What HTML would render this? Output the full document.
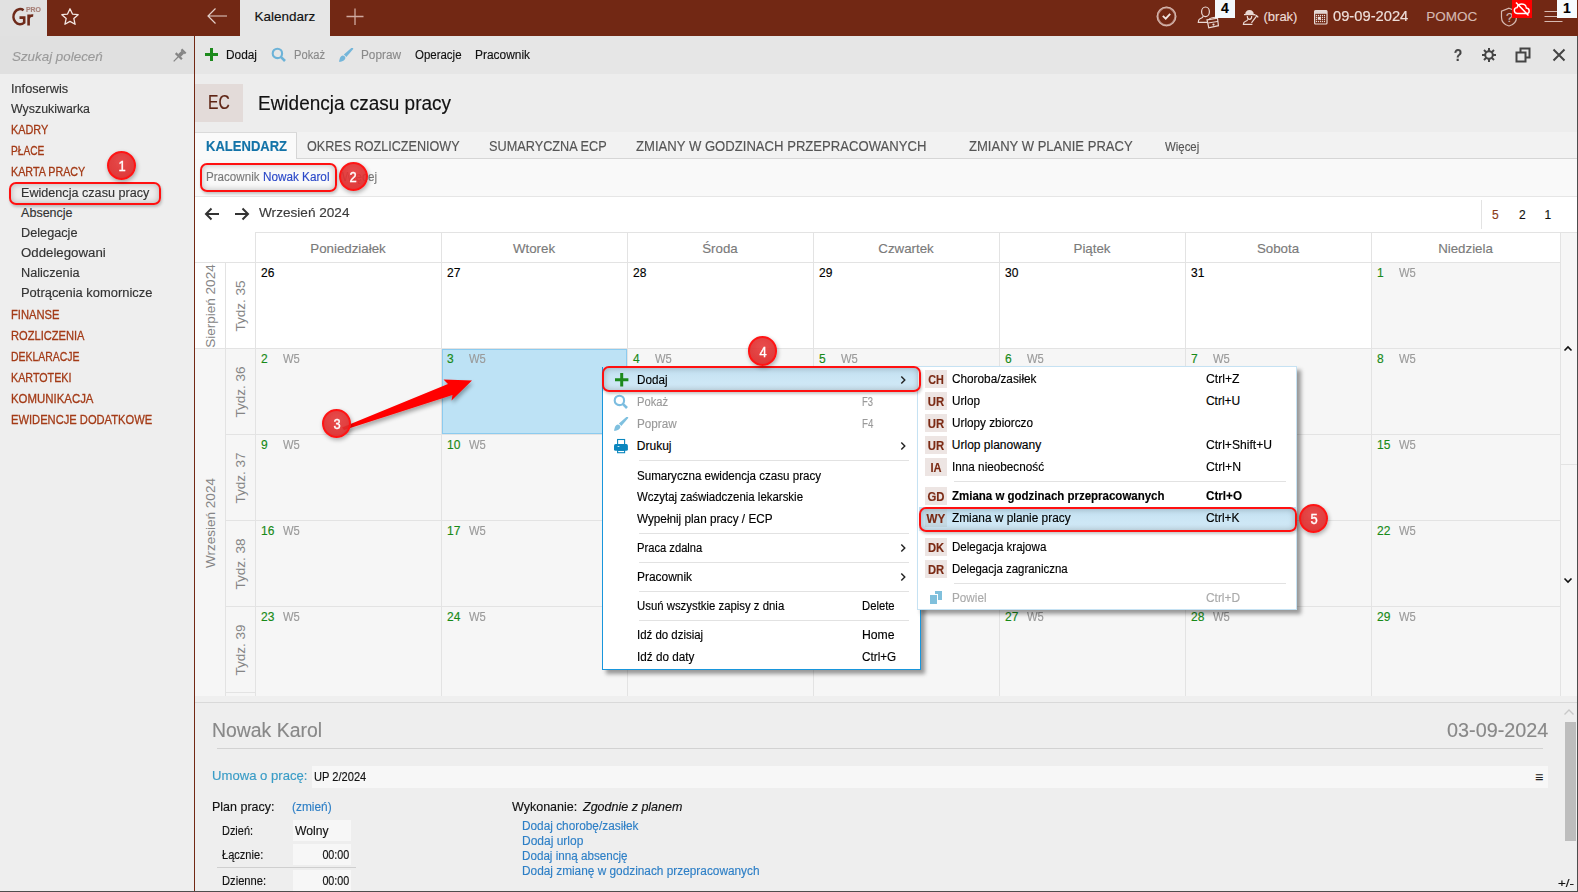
<!DOCTYPE html>
<html><head><meta charset="utf-8"><title>Ewidencja czasu pracy</title>
<style>
html,body{margin:0;padding:0;width:1578px;height:892px;overflow:hidden;background:#eeeeee;}
body{position:relative;font-family:"Liberation Sans", sans-serif;}
.a{position:absolute;}
.t{position:absolute;line-height:0;white-space:nowrap;-webkit-text-stroke:0.15px currentColor;}
</style></head><body>
<div class="a" style="left:0px;top:0px;width:1578px;height:36px;background:#722814;"></div>
<div class="a" style="left:0px;top:0px;width:47px;height:36px;background:#e1e1e1;"></div>
<div class="a" style="left:240px;top:0px;width:90px;height:36px;background:#e6e6e6;"></div>
<div class="a" style="left:0px;top:36px;width:194px;height:38px;background:#e0e0e0;"></div>
<div class="a" style="left:0px;top:74px;width:194px;height:818px;background:#eeeeee;"></div>
<div class="a" style="left:194px;top:36px;width:1px;height:856px;background:#722814;"></div>
<div class="a" style="left:195px;top:36px;width:1382px;height:38px;background:#e6e6e6;"></div>
<div class="a" style="left:195px;top:74px;width:1382px;height:58px;background:#ededed;"></div>
<div class="a" style="left:195px;top:84px;width:48px;height:38px;background:#e3dbd9;"></div>
<div class="a" style="left:195px;top:132px;width:1382px;height:26px;background:#f2f2f2;"></div>
<div class="a" style="left:195px;top:132px;width:102px;height:1px;background:#dadada;"></div>
<div class="a" style="left:296px;top:158px;width:1281px;height:1px;background:#d6d6d6;"></div>
<div class="a" style="left:195px;top:133px;width:102px;height:26px;background:#fafafa;border-right:1px solid #d6d6d6;box-sizing:border-box;"></div>
<div class="a" style="left:195px;top:159px;width:1382px;height:37px;background:#f9f9f9;"></div>
<div class="a" style="left:195px;top:196px;width:1382px;height:1px;background:#e6e6e6;"></div>
<div class="a" style="left:195px;top:197px;width:1382px;height:499px;background:#ffffff;"></div>
<div class="a" style="left:195px;top:696px;width:1382px;height:6px;background:#efefef;"></div>
<div class="a" style="left:195px;top:702px;width:1382px;height:1px;background:#d9d9d9;"></div>
<div class="a" style="left:195px;top:703px;width:1382px;height:188px;background:#eeeeee;"></div>
<div class="a" style="left:1577px;top:36px;width:1px;height:856px;background:#4d4d4d;"></div>
<div class="a" style="left:0px;top:891px;width:1578px;height:1px;background:#4d4d4d;"></div>
<div class="a" style="left:195px;top:348px;width:1365px;height:348px;background:#f6f6f6;"></div>
<div class="a" style="left:1371px;top:262px;width:189px;height:86px;background:#f6f6f6;"></div>
<div class="a" style="left:1560px;top:232px;width:17px;height:464px;background:#f6f6f6;"></div>
<div class="a" style="left:1561px;top:464px;width:16px;height:1px;background:#e3e3e3;"></div>
<div class="a" style="left:255px;top:232px;width:1322px;height:1px;background:#e3e3e3;"></div>
<div class="a" style="left:195px;top:262px;width:1365px;height:1px;background:#e3e3e3;"></div>
<div class="a" style="left:255px;top:232px;width:1px;height:464px;background:#e3e3e3;"></div>
<div class="a" style="left:441px;top:232px;width:1px;height:464px;background:#e3e3e3;"></div>
<div class="a" style="left:627px;top:232px;width:1px;height:464px;background:#e3e3e3;"></div>
<div class="a" style="left:813px;top:232px;width:1px;height:464px;background:#e3e3e3;"></div>
<div class="a" style="left:999px;top:232px;width:1px;height:464px;background:#e3e3e3;"></div>
<div class="a" style="left:1185px;top:232px;width:1px;height:464px;background:#e3e3e3;"></div>
<div class="a" style="left:1371px;top:232px;width:1px;height:464px;background:#e3e3e3;"></div>
<div class="a" style="left:1560px;top:232px;width:1px;height:464px;background:#e3e3e3;"></div>
<div class="a" style="left:225px;top:262px;width:1px;height:434px;background:#e3e3e3;"></div>
<div class="a" style="left:195px;top:348px;width:1365px;height:1px;background:#e3e3e3;"></div>
<div class="a" style="left:225px;top:434px;width:1335px;height:1px;background:#e3e3e3;"></div>
<div class="a" style="left:225px;top:520px;width:1335px;height:1px;background:#e3e3e3;"></div>
<div class="a" style="left:225px;top:606px;width:1335px;height:1px;background:#e3e3e3;"></div>
<div class="a" style="left:225px;top:692px;width:30px;height:1px;background:#e3e3e3;"></div>
<div class="t" style="top:248.59px;font-size:13.3px;color:#7a7a7a;left:48.0px;width:600px;text-align:center;">Poniedziałek</div>
<div class="t" style="top:248.59px;font-size:13.3px;color:#7a7a7a;left:234.0px;width:600px;text-align:center;">Wtorek</div>
<div class="t" style="top:248.59px;font-size:13.3px;color:#7a7a7a;left:420.0px;width:600px;text-align:center;">Środa</div>
<div class="t" style="top:248.59px;font-size:13.3px;color:#7a7a7a;left:606.0px;width:600px;text-align:center;">Czwartek</div>
<div class="t" style="top:248.59px;font-size:13.3px;color:#7a7a7a;left:792.0px;width:600px;text-align:center;">Piątek</div>
<div class="t" style="top:248.59px;font-size:13.3px;color:#7a7a7a;left:978.0px;width:600px;text-align:center;">Sobota</div>
<div class="t" style="top:248.59px;font-size:13.3px;color:#7a7a7a;left:1165.5px;width:600px;text-align:center;">Niedziela</div>
<div class="a" style="left:442px;top:349px;width:185px;height:85px;background:#bde2f5;border:1px solid #8ccbef;box-sizing:border-box;"></div>
<div class="t" style="top:273.24px;font-size:12px;color:#000;left:261px;">26</div>
<div class="t" style="top:273.24px;font-size:12px;color:#000;left:447px;">27</div>
<div class="t" style="top:273.24px;font-size:12px;color:#000;left:633px;">28</div>
<div class="t" style="top:273.24px;font-size:12px;color:#000;left:819px;">29</div>
<div class="t" style="top:273.24px;font-size:12px;color:#000;left:1005px;">30</div>
<div class="t" style="top:273.24px;font-size:12px;color:#000;left:1191px;">31</div>
<div class="t" style="top:273.24px;font-size:12px;color:#178a17;left:1377px;">1</div>
<div class="t" style="top:273.24px;font-size:12px;color:#9a9a9a;transform:scaleX(0.9333);transform-origin:left center;left:1399px;">W5</div>
<div class="t" style="top:359.24px;font-size:12px;color:#178a17;left:261px;">2</div>
<div class="t" style="top:359.24px;font-size:12px;color:#9a9a9a;transform:scaleX(0.9333);transform-origin:left center;left:283px;">W5</div>
<div class="t" style="top:359.24px;font-size:12px;color:#178a17;left:447px;">3</div>
<div class="t" style="top:359.24px;font-size:12px;color:#9a9a9a;transform:scaleX(0.9333);transform-origin:left center;left:469px;">W5</div>
<div class="t" style="top:359.24px;font-size:12px;color:#178a17;left:633px;">4</div>
<div class="t" style="top:359.24px;font-size:12px;color:#9a9a9a;transform:scaleX(0.9333);transform-origin:left center;left:655px;">W5</div>
<div class="t" style="top:359.24px;font-size:12px;color:#178a17;left:819px;">5</div>
<div class="t" style="top:359.24px;font-size:12px;color:#9a9a9a;transform:scaleX(0.9333);transform-origin:left center;left:841px;">W5</div>
<div class="t" style="top:359.24px;font-size:12px;color:#178a17;left:1005px;">6</div>
<div class="t" style="top:359.24px;font-size:12px;color:#9a9a9a;transform:scaleX(0.9333);transform-origin:left center;left:1027px;">W5</div>
<div class="t" style="top:359.24px;font-size:12px;color:#178a17;left:1191px;">7</div>
<div class="t" style="top:359.24px;font-size:12px;color:#9a9a9a;transform:scaleX(0.9333);transform-origin:left center;left:1213px;">W5</div>
<div class="t" style="top:359.24px;font-size:12px;color:#178a17;left:1377px;">8</div>
<div class="t" style="top:359.24px;font-size:12px;color:#9a9a9a;transform:scaleX(0.9333);transform-origin:left center;left:1399px;">W5</div>
<div class="t" style="top:445.24px;font-size:12px;color:#178a17;left:261px;">9</div>
<div class="t" style="top:445.24px;font-size:12px;color:#9a9a9a;transform:scaleX(0.9333);transform-origin:left center;left:283px;">W5</div>
<div class="t" style="top:445.24px;font-size:12px;color:#178a17;left:447px;">10</div>
<div class="t" style="top:445.24px;font-size:12px;color:#9a9a9a;transform:scaleX(0.9333);transform-origin:left center;left:469px;">W5</div>
<div class="t" style="top:445.24px;font-size:12px;color:#178a17;left:633px;">11</div>
<div class="t" style="top:445.24px;font-size:12px;color:#9a9a9a;transform:scaleX(0.9333);transform-origin:left center;left:655px;">W5</div>
<div class="t" style="top:445.24px;font-size:12px;color:#178a17;left:819px;">12</div>
<div class="t" style="top:445.24px;font-size:12px;color:#9a9a9a;transform:scaleX(0.9333);transform-origin:left center;left:841px;">W5</div>
<div class="t" style="top:445.24px;font-size:12px;color:#178a17;left:1005px;">13</div>
<div class="t" style="top:445.24px;font-size:12px;color:#9a9a9a;transform:scaleX(0.9333);transform-origin:left center;left:1027px;">W5</div>
<div class="t" style="top:445.24px;font-size:12px;color:#178a17;left:1191px;">14</div>
<div class="t" style="top:445.24px;font-size:12px;color:#9a9a9a;transform:scaleX(0.9333);transform-origin:left center;left:1213px;">W5</div>
<div class="t" style="top:445.24px;font-size:12px;color:#178a17;left:1377px;">15</div>
<div class="t" style="top:445.24px;font-size:12px;color:#9a9a9a;transform:scaleX(0.9333);transform-origin:left center;left:1399px;">W5</div>
<div class="t" style="top:531.24px;font-size:12px;color:#178a17;left:261px;">16</div>
<div class="t" style="top:531.24px;font-size:12px;color:#9a9a9a;transform:scaleX(0.9333);transform-origin:left center;left:283px;">W5</div>
<div class="t" style="top:531.24px;font-size:12px;color:#178a17;left:447px;">17</div>
<div class="t" style="top:531.24px;font-size:12px;color:#9a9a9a;transform:scaleX(0.9333);transform-origin:left center;left:469px;">W5</div>
<div class="t" style="top:531.24px;font-size:12px;color:#178a17;left:633px;">18</div>
<div class="t" style="top:531.24px;font-size:12px;color:#9a9a9a;transform:scaleX(0.9333);transform-origin:left center;left:655px;">W5</div>
<div class="t" style="top:531.24px;font-size:12px;color:#178a17;left:819px;">19</div>
<div class="t" style="top:531.24px;font-size:12px;color:#9a9a9a;transform:scaleX(0.9333);transform-origin:left center;left:841px;">W5</div>
<div class="t" style="top:531.24px;font-size:12px;color:#178a17;left:1005px;">20</div>
<div class="t" style="top:531.24px;font-size:12px;color:#9a9a9a;transform:scaleX(0.9333);transform-origin:left center;left:1027px;">W5</div>
<div class="t" style="top:531.24px;font-size:12px;color:#178a17;left:1191px;">21</div>
<div class="t" style="top:531.24px;font-size:12px;color:#9a9a9a;transform:scaleX(0.9333);transform-origin:left center;left:1213px;">W5</div>
<div class="t" style="top:531.24px;font-size:12px;color:#178a17;left:1377px;">22</div>
<div class="t" style="top:531.24px;font-size:12px;color:#9a9a9a;transform:scaleX(0.9333);transform-origin:left center;left:1399px;">W5</div>
<div class="t" style="top:617.24px;font-size:12px;color:#178a17;left:261px;">23</div>
<div class="t" style="top:617.24px;font-size:12px;color:#9a9a9a;transform:scaleX(0.9333);transform-origin:left center;left:283px;">W5</div>
<div class="t" style="top:617.24px;font-size:12px;color:#178a17;left:447px;">24</div>
<div class="t" style="top:617.24px;font-size:12px;color:#9a9a9a;transform:scaleX(0.9333);transform-origin:left center;left:469px;">W5</div>
<div class="t" style="top:617.24px;font-size:12px;color:#178a17;left:633px;">25</div>
<div class="t" style="top:617.24px;font-size:12px;color:#9a9a9a;transform:scaleX(0.9333);transform-origin:left center;left:655px;">W5</div>
<div class="t" style="top:617.24px;font-size:12px;color:#178a17;left:819px;">26</div>
<div class="t" style="top:617.24px;font-size:12px;color:#9a9a9a;transform:scaleX(0.9333);transform-origin:left center;left:841px;">W5</div>
<div class="t" style="top:617.24px;font-size:12px;color:#178a17;left:1005px;">27</div>
<div class="t" style="top:617.24px;font-size:12px;color:#9a9a9a;transform:scaleX(0.9333);transform-origin:left center;left:1027px;">W5</div>
<div class="t" style="top:617.24px;font-size:12px;color:#178a17;left:1191px;">28</div>
<div class="t" style="top:617.24px;font-size:12px;color:#9a9a9a;transform:scaleX(0.9333);transform-origin:left center;left:1213px;">W5</div>
<div class="t" style="top:617.24px;font-size:12px;color:#178a17;left:1377px;">29</div>
<div class="t" style="top:617.24px;font-size:12px;color:#9a9a9a;transform:scaleX(0.9333);transform-origin:left center;left:1399px;">W5</div>
<div class="a" style="left:91px;top:296.2px;width:300px;height:20px;line-height:20px;text-align:center;font-size:13.5px;color:#858585;transform:rotate(-90deg);white-space:nowrap">Tydz. 35</div>
<div class="a" style="left:91px;top:382.2px;width:300px;height:20px;line-height:20px;text-align:center;font-size:13.5px;color:#858585;transform:rotate(-90deg);white-space:nowrap">Tydz. 36</div>
<div class="a" style="left:91px;top:468.2px;width:300px;height:20px;line-height:20px;text-align:center;font-size:13.5px;color:#858585;transform:rotate(-90deg);white-space:nowrap">Tydz. 37</div>
<div class="a" style="left:91px;top:554.2px;width:300px;height:20px;line-height:20px;text-align:center;font-size:13.5px;color:#858585;transform:rotate(-90deg);white-space:nowrap">Tydz. 38</div>
<div class="a" style="left:91px;top:640.2px;width:300px;height:20px;line-height:20px;text-align:center;font-size:13.5px;color:#858585;transform:rotate(-90deg);white-space:nowrap">Tydz. 39</div>
<div class="a" style="left:61px;top:296px;width:300px;height:20px;line-height:20px;text-align:center;font-size:13.5px;color:#858585;transform:rotate(-90deg);white-space:nowrap">Sierpień 2024</div>
<div class="a" style="left:61px;top:513px;width:300px;height:20px;line-height:20px;text-align:center;font-size:13.5px;color:#858585;transform:rotate(-90deg);white-space:nowrap">Wrzesień 2024</div>
<svg class="a" style="left:204px;top:207px;" width="16" height="14" viewBox="0 0 16 14"><path d="M15 7H2M7.5 1.5L2 7l5.5 5.5" fill="none" stroke="#333" stroke-width="2"/></svg>
<svg class="a" style="left:234px;top:207px;" width="16" height="14" viewBox="0 0 16 14"><path d="M1 7h13M8.5 1.5L14 7l-5.5 5.5" fill="none" stroke="#333" stroke-width="2"/></svg>
<div class="t" style="top:213.42px;font-size:13.5px;color:#3a3a3a;transform:scaleX(1.0078);transform-origin:left center;left:259px;">Wrzesień 2024</div>
<div class="a" style="left:1481px;top:200px;width:1px;height:29px;background:#e3e3e3;"></div>
<div class="t" style="top:215.44px;font-size:12px;color:#8b3a1a;left:1492px;">5</div>
<div class="t" style="top:215.44px;font-size:12px;color:#111;left:1519px;">2</div>
<div class="t" style="top:215.44px;font-size:12px;color:#111;left:1544.4px;">1</div>
<svg class="a" style="left:1563px;top:344px;" width="10" height="8" viewBox="0 0 10 8"><path d="M1.5 6.5L5 3l3.5 3.5" fill="none" stroke="#111" stroke-width="1.6"/></svg>
<svg class="a" style="left:1563px;top:577px;" width="10" height="8" viewBox="0 0 10 8"><path d="M1.5 1.5L5 5l3.5-3.5" fill="none" stroke="#111" stroke-width="1.6"/></svg>
<svg class="a" style="left:10px;top:6px;" width="26" height="22" viewBox="0 0 26 22"><path d="M13.6 4.2A6.6 7.6 0 1 0 14.2 16.6V11.6H9.5" fill="none" stroke="#6e2a1a" stroke-width="2.6"/><path d="M18.6 8.5V19.5M18.6 12.5C19.2 10 20.8 9.3 23.2 9.6" fill="none" stroke="#6e2a1a" stroke-width="2.6"/></svg>
<div class="t" style="top:10.07px;font-size:7.3px;color:#a88078;font-weight:700;transform:scaleX(0.9482);transform-origin:left center;left:26px;">PRO</div>
<svg class="a" style="left:60px;top:7px;" width="20" height="20" viewBox="0 0 20 20"><path d="M10 1.8l2.45 5.3 5.7.6-4.3 3.9 1.25 5.7L10 14.4l-5.1 2.9 1.25-5.7-4.3-3.9 5.7-.6z" fill="none" stroke="#f3e6e2" stroke-width="1.3" stroke-linejoin="round"/></svg>
<svg class="a" style="left:206px;top:7px;" width="22" height="18" viewBox="0 0 22 18"><path d="M21 9H2M9.5 1.5L2 9l7.5 7.5" fill="none" stroke="#e3cfc9" stroke-width="1.2"/></svg>
<div class="t" style="top:16.52px;font-size:13.5px;color:#111;left:254.5px;">Kalendarz</div>
<svg class="a" style="left:346px;top:8px;" width="18" height="18" viewBox="0 0 18 18"><path d="M9 0.5v16.5M0.5 8.5h17" fill="none" stroke="#cfa99f" stroke-width="1.3"/></svg>
<svg class="a" style="left:1156px;top:6px;" width="21" height="21" viewBox="0 0 21 21"><circle cx="10.5" cy="10.4" r="8.9" fill="none" stroke="#b98a7e" stroke-width="2.2"/><circle cx="10.5" cy="10.4" r="9.3" fill="none" stroke="#d7bab2" stroke-width="1"/><path d="M6.8 9.8l2.9 2.8 4.5-4.8" fill="none" stroke="#f1e4e0" stroke-width="1.8"/></svg>
<svg class="a" style="left:1196px;top:5px;" width="26" height="25" viewBox="0 0 26 25"><ellipse cx="9.5" cy="6.8" rx="3.9" ry="4.8" fill="none" stroke="#ead9d4" stroke-width="1.2"/><path d="M7.3 11.2c-.4 1.6-1.6 2-3.3 2.6C2.6 14.3 2.3 15.3 2.3 17.3h9" fill="none" stroke="#ead9d4" stroke-width="1.2"/><path d="M13.2 14.2c.3-.6 2.4-1.6 7.8-2.2" fill="none" stroke="#ead9d4" stroke-width="1.1"/><path d="M11 14.8l10.5-1.6.9 7.5-9.6 2.2z" fill="#722814" stroke="#ead9d4" stroke-width="1.2"/><path d="M12.2 18l9.8-1.6" stroke="#ead9d4" stroke-width="1"/><circle cx="17.5" cy="19.6" r="1.1" fill="#ead9d4"/></svg>
<div class="a" style="left:1215px;top:0px;width:20px;height:18px;background:#f3f8fc;"></div>
<div class="t" style="top:7.95px;font-size:14px;color:#000;font-weight:700;left:925px;width:600px;text-align:center;">4</div>
<svg class="a" style="left:1241px;top:8px;" width="20" height="18" viewBox="0 0 20 18"><path d="M4.2 6.5C4.2 3.5 6 2 8.5 2s4.3 1.5 4.3 4.5z" fill="#ead9d4"/><path d="M3 6.6h11" stroke="#ead9d4" stroke-width="1.2"/><path d="M6.3 8c0 2.2 1 3.4 2.2 3.4s2.2-1.2 2.2-3.4" fill="none" stroke="#ead9d4" stroke-width="1.2"/><path d="M6.8 11.4c-.3 1.2-1.2 1.6-2.6 2.1-1.3.5-1.8 1.3-1.8 2.8h9" fill="none" stroke="#ead9d4" stroke-width="1.2"/><path d="M10.5 14.8l5.4-7.2M12.6 6.8c1.8-.3 3.6.7 4.6 2.6" fill="none" stroke="#ead9d4" stroke-width="1.2"/></svg>
<div class="t" style="top:16.90px;font-size:13px;color:#eddcd6;left:1263.5px;">(brak)</div>
<svg class="a" style="left:1314px;top:10px;" width="14" height="15" viewBox="0 0 14 15"><rect x="0.6" y="0.6" width="12.4" height="13.4" rx="1" fill="none" stroke="#e9dcd8" stroke-width="1.2"/><rect x="0.6" y="0.6" width="12.4" height="3.2" fill="#e3d6d2"/><g fill="#e9dcd8"><circle cx="2.5" cy="5.5" r="0.65"/><circle cx="2.5" cy="7.5" r="0.65"/><circle cx="2.5" cy="9.5" r="0.65"/><circle cx="2.5" cy="11.5" r="0.65"/><circle cx="4.5" cy="5.5" r="0.65"/><circle cx="4.5" cy="11.5" r="0.65"/><circle cx="6.5" cy="5.5" r="0.65"/><circle cx="6.5" cy="7.5" r="0.65"/><circle cx="6.5" cy="9.5" r="0.65"/><circle cx="6.5" cy="11.5" r="0.65"/><circle cx="8.5" cy="5.5" r="0.65"/><circle cx="8.5" cy="7.5" r="0.65"/><circle cx="8.5" cy="9.5" r="0.65"/><circle cx="8.5" cy="11.5" r="0.65"/><circle cx="10.5" cy="5.5" r="0.65"/><circle cx="10.5" cy="7.5" r="0.65"/><circle cx="10.5" cy="9.5" r="0.65"/><circle cx="10.5" cy="11.5" r="0.65"/><rect x="3.8" y="6.8" width="3" height="3"/></g></svg>
<div class="t" style="top:15.95px;font-size:14px;color:#eedfda;transform:scaleX(1.0515);transform-origin:left center;left:1333px;">09-09-2024</div>
<div class="t" style="top:16.72px;font-size:13.5px;color:#d5b9b1;left:1426.3px;">POMOC</div>
<svg class="a" style="left:1499px;top:7px;" width="20" height="20" viewBox="0 0 20 20"><path d="M10 1.2l7.5 3v6c0 4.5-3.3 7.6-7.5 8.8C5.8 17.8 2.5 14.7 2.5 10.2v-6z" fill="none" stroke="#d7bab2" stroke-width="1.2"/></svg>
<div class="t" style="top:17.57px;font-size:12.5px;color:#d7bab2;left:1209.5px;width:600px;text-align:center;">?</div>
<div class="a" style="left:1512px;top:0px;width:20px;height:18px;background:#ff0000;"></div>
<svg class="a" style="left:1513px;top:1px;" width="18" height="16" viewBox="0 0 18 16"><path d="M4.5 12.5c-2 0-3.2-1.3-3.2-3 0-1.6 1.2-2.8 2.8-2.9C4.6 4.4 6.5 3 8.8 3c2.4 0 4.3 1.7 4.6 4 1.6.2 2.8 1.4 2.8 2.9 0 1.5-1.2 2.6-2.7 2.6z" fill="none" stroke="#fff" stroke-width="1.4"/><path d="M3 1.5l12.5 13" stroke="#fff" stroke-width="1.5"/></svg>
<svg class="a" style="left:1544px;top:9px;" width="20" height="15" viewBox="0 0 20 15"><path d="M0.5 2.5h18M0.5 7.5h18M0.5 12.5h18" stroke="#d7bab2" stroke-width="1.2"/></svg>
<div class="a" style="left:1557px;top:0px;width:20px;height:18px;background:#f7fbfe;"></div>
<div class="t" style="top:7.95px;font-size:14px;color:#000;font-weight:700;left:1267px;width:600px;text-align:center;">1</div>
<div class="t" style="top:56.80px;font-size:13px;color:#9a9a9a;transform:scaleX(1.0287);transform-origin:left center;font-style:italic;left:11.8px;">Szukaj poleceń</div>
<svg class="a" style="left:170.5px;top:47.5px;" width="16" height="16" viewBox="0 0 16 16"><g transform="rotate(45 8 8)" fill="#858585"><rect x="5" y="0.5" width="6" height="2.2"/><rect x="6.2" y="2.5" width="3.6" height="5"/><rect x="3.6" y="7.2" width="8.8" height="2.2"/><rect x="7.4" y="9" width="1.2" height="6.5"/></g></svg>
<div class="t" style="top:88.57px;font-size:12.5px;color:#333;transform:scaleX(1.0165);transform-origin:left center;left:11.4px;">Infoserwis</div>
<div class="t" style="top:109.37px;font-size:12.5px;color:#333;transform:scaleX(0.9905);transform-origin:left center;left:11.4px;">Wyszukiwarka</div>
<div class="t" style="top:130.16px;font-size:12.8px;color:#a33a16;transform:scaleX(0.8502);transform-origin:left center;left:11.4px;-webkit-text-stroke:0.3px currentColor;">KADRY</div>
<div class="t" style="top:150.56px;font-size:12.8px;color:#a33a16;transform:scaleX(0.7933);transform-origin:left center;left:11.4px;-webkit-text-stroke:0.3px currentColor;">PŁACE</div>
<div class="t" style="top:171.76px;font-size:12.8px;color:#a33a16;transform:scaleX(0.8401);transform-origin:left center;left:11.4px;-webkit-text-stroke:0.3px currentColor;">KARTA PRACY</div>
<div class="t" style="top:192.97px;font-size:12.5px;color:#333;transform:scaleX(1.0091);transform-origin:left center;left:21.1px;">Ewidencja czasu pracy</div>
<div class="t" style="top:212.77px;font-size:12.5px;color:#333;left:21.1px;">Absencje</div>
<div class="t" style="top:232.87px;font-size:12.5px;color:#333;transform:scaleX(1.0163);transform-origin:left center;left:21.1px;">Delegacje</div>
<div class="t" style="top:252.77px;font-size:12.5px;color:#333;transform:scaleX(1.0598);transform-origin:left center;left:21.1px;">Oddelegowani</div>
<div class="t" style="top:272.87px;font-size:12.5px;color:#333;transform:scaleX(1.0145);transform-origin:left center;left:21.1px;">Naliczenia</div>
<div class="t" style="top:292.67px;font-size:12.5px;color:#333;transform:scaleX(1.0335);transform-origin:left center;left:21.1px;">Potrącenia komornicze</div>
<div class="t" style="top:315.16px;font-size:12.8px;color:#a33a16;transform:scaleX(0.8743);transform-origin:left center;left:11.3px;-webkit-text-stroke:0.3px currentColor;">FINANSE</div>
<div class="t" style="top:335.66px;font-size:12.8px;color:#a33a16;transform:scaleX(0.8685);transform-origin:left center;left:11.3px;-webkit-text-stroke:0.3px currentColor;">ROZLICZENIA</div>
<div class="t" style="top:356.96px;font-size:12.8px;color:#a33a16;transform:scaleX(0.8161);transform-origin:left center;left:11.3px;-webkit-text-stroke:0.3px currentColor;">DEKLARACJE</div>
<div class="t" style="top:377.66px;font-size:12.8px;color:#a33a16;transform:scaleX(0.8393);transform-origin:left center;left:11.3px;-webkit-text-stroke:0.3px currentColor;">KARTOTEKI</div>
<div class="t" style="top:398.96px;font-size:12.8px;color:#a33a16;transform:scaleX(0.8923);transform-origin:left center;left:11.3px;-webkit-text-stroke:0.3px currentColor;">KOMUNIKACJA</div>
<div class="t" style="top:419.66px;font-size:12.8px;color:#a33a16;transform:scaleX(0.8721);transform-origin:left center;left:11.3px;-webkit-text-stroke:0.3px currentColor;">EWIDENCJE DODATKOWE</div>
<svg class="a" style="left:204px;top:47px;" width="15" height="15" viewBox="0 0 15 15"><path d="M7.5 1v13M1 7.5h13" stroke="#1c8a1c" stroke-width="3"/></svg>
<div class="t" style="top:54.97px;font-size:12.5px;color:#111;transform:scaleX(0.9492);transform-origin:left center;left:226px;">Dodaj</div>
<svg class="a" style="left:271px;top:47px;" width="16" height="16" viewBox="0 0 16 16"><circle cx="6.4" cy="6.4" r="4.7" fill="none" stroke="#6db3d8" stroke-width="2.1"/><path d="M9.8 9.8l4.2 4.2" stroke="#6db3d8" stroke-width="2.6"/></svg>
<div class="t" style="top:54.97px;font-size:12.5px;color:#8a8a8a;transform:scaleX(0.8923);transform-origin:left center;left:294px;">Pokaż</div>
<svg class="a" style="left:338.8px;top:48px;" width="15" height="15" viewBox="0 0 15 15"><g transform="translate(6.9 6.9) rotate(45)" fill="#74b6da"><path d="M-1 -9.4Q0 -10.4 1 -9.4L1.75 1.1H-1.75Z"/><path d="M-2.4 4.3A2.4 2.4 0 0 1 2.4 4.3C2.4 6.6 1.2 8.6 -0.4 9.9C-0.2 8.4 -2.4 7.2 -2.4 4.3Z"/></g></svg>
<div class="t" style="top:54.97px;font-size:12.5px;color:#8a8a8a;transform:scaleX(0.9438);transform-origin:left center;left:361px;">Popraw</div>
<div class="t" style="top:54.97px;font-size:12.5px;color:#111;transform:scaleX(0.9168);transform-origin:left center;left:414.6px;">Operacje</div>
<div class="t" style="top:54.97px;font-size:12.5px;color:#111;transform:scaleX(0.9539);transform-origin:left center;left:475px;">Pracownik</div>
<div class="t" style="top:56.01px;font-size:17px;color:#444;font-weight:700;transform:scaleX(0.8184);transform-origin:center center;left:1157.7px;width:600px;text-align:center;">?</div>
<svg class="a" style="left:1481px;top:47px;" width="16" height="16" viewBox="0 0 16 16"><g stroke="#444" stroke-width="2"><path d="M8 1v3M8 12v3M1 8h3M12 8h3M3 3l2.1 2.1M10.9 10.9L13 13M3 13l2.1-2.1M10.9 5.1L13 3"/></g><circle cx="8" cy="8" r="3.8" fill="none" stroke="#444" stroke-width="2"/></svg>
<svg class="a" style="left:1515px;top:47px;" width="16" height="16" viewBox="0 0 16 16"><rect x="1.5" y="5.5" width="9" height="9" fill="none" stroke="#444" stroke-width="2"/><path d="M5.5 5.5V1.5h9v9h-4" fill="none" stroke="#444" stroke-width="2"/></svg>
<svg class="a" style="left:1552px;top:48px;" width="14" height="14" viewBox="0 0 14 14"><path d="M1.5 1.5l11 11M12.5 1.5l-11 11" stroke="#444" stroke-width="2"/></svg>
<div class="t" style="top:102.34px;font-size:19.5px;color:#5e2414;transform:scaleX(0.8010);transform-origin:left center;left:207.7px;">EC</div>
<div class="t" style="top:102.64px;font-size:19.5px;color:#111;transform:scaleX(0.9731);transform-origin:left center;left:258px;">Ewidencja czasu pracy</div>
<div class="t" style="top:147.22px;font-size:13.8px;color:#1373a8;font-weight:700;transform:scaleX(0.9446);transform-origin:left center;left:206px;">KALENDARZ</div>
<div class="t" style="top:147.22px;font-size:13.8px;color:#555;transform:scaleX(0.9135);transform-origin:left center;left:307px;">OKRES ROZLICZENIOWY</div>
<div class="t" style="top:147.22px;font-size:13.8px;color:#555;transform:scaleX(0.9209);transform-origin:left center;left:489px;">SUMARYCZNA ECP</div>
<div class="t" style="top:147.22px;font-size:13.8px;color:#555;transform:scaleX(0.9496);transform-origin:left center;left:636px;">ZMIANY W GODZINACH PRZEPRACOWANYCH</div>
<div class="t" style="top:147.22px;font-size:13.8px;color:#555;transform:scaleX(0.9460);transform-origin:left center;left:969px;">ZMIANY W PLANIE PRACY</div>
<div class="t" style="top:146.90px;font-size:13px;color:#555;transform:scaleX(0.8767);transform-origin:left center;left:1165.3px;">Więcej</div>
<div class="t" style="top:176.97px;font-size:12.5px;color:#7a7a7a;transform:scaleX(0.9279);transform-origin:left center;left:205.6px;">Pracownik</div>
<div class="t" style="top:176.97px;font-size:12.5px;color:#2a48c8;transform:scaleX(0.9384);transform-origin:left center;left:263.3px;">Nowak Karol</div>
<div class="t" style="top:176.97px;font-size:12.5px;color:#7a7a7a;transform:scaleX(0.9331);transform-origin:left center;left:342px;">Więcej</div>
<div class="t" style="top:730.47px;font-size:20px;color:#888;transform:scaleX(0.9702);transform-origin:left center;left:212px;">Nowak Karol</div>
<div class="t" style="top:730.47px;font-size:20px;color:#888;transform:scaleX(0.9902);transform-origin:right center;right:29.5px;">03-09-2024</div>
<div class="a" style="left:217px;top:748px;width:1326px;height:1px;background:#d2d2d2;"></div>
<div class="t" style="top:775.50px;font-size:13px;color:#3a9cc6;transform:scaleX(1.0090);transform-origin:left center;left:211.5px;">Umowa o pracę:</div>
<div class="a" style="left:312px;top:766px;width:1236px;height:22px;background:#f7f7f7;"></div>
<div class="t" style="top:777.07px;font-size:12.5px;color:#111;transform:scaleX(0.8888);transform-origin:left center;left:314.4px;">UP 2/2024</div>
<div class="t" style="top:776.55px;font-size:14px;color:#222;left:1535px;">≡</div>
<div class="t" style="top:806.90px;font-size:13px;color:#111;transform:scaleX(0.9611);transform-origin:left center;left:211.5px;">Plan pracy:</div>
<div class="t" style="top:807.07px;font-size:12.5px;color:#2d7fc6;transform:scaleX(0.9503);transform-origin:left center;left:292px;">(zmień)</div>
<div class="t" style="top:831.07px;font-size:12.5px;color:#111;transform:scaleX(0.8749);transform-origin:left center;left:221.5px;">Dzień:</div>
<div class="t" style="top:855.07px;font-size:12.5px;color:#111;transform:scaleX(0.8849);transform-origin:left center;left:221.5px;">Łącznie:</div>
<div class="t" style="top:880.87px;font-size:12.5px;color:#111;transform:scaleX(0.8939);transform-origin:left center;left:221.5px;">Dzienne:</div>
<div class="a" style="left:293px;top:820px;width:58px;height:21px;background:#f7f7f7;"></div>
<div class="a" style="left:293px;top:844px;width:58px;height:21px;background:#f7f7f7;"></div>
<div class="a" style="left:293px;top:870px;width:58px;height:21px;background:#f7f7f7;"></div>
<div class="a" style="left:217px;top:867px;width:139px;height:1px;background:#cfcfcf;"></div>
<div class="t" style="top:831.07px;font-size:12.5px;color:#111;transform:scaleX(0.9709);transform-origin:left center;left:295.2px;">Wolny</div>
<div class="t" style="top:855.07px;font-size:12.5px;color:#111;transform:scaleX(0.8599);transform-origin:right center;right:1229px;">00:00</div>
<div class="t" style="top:880.87px;font-size:12.5px;color:#111;transform:scaleX(0.8599);transform-origin:right center;right:1229px;">00:00</div>
<div class="t" style="top:806.90px;font-size:13px;color:#111;transform:scaleX(0.9615);transform-origin:left center;left:511.5px;">Wykonanie:</div>
<div class="t" style="top:806.90px;font-size:13px;color:#111;transform:scaleX(0.9619);transform-origin:left center;font-style:italic;left:582.5px;">Zgodnie z planem</div>
<div class="t" style="top:826.07px;font-size:12.5px;color:#2d7fc6;transform:scaleX(0.9464);transform-origin:left center;left:521.6px;">Dodaj chorobę/zasiłek</div>
<div class="t" style="top:841.07px;font-size:12.5px;color:#2d7fc6;transform:scaleX(0.9589);transform-origin:left center;left:521.6px;">Dodaj urlop</div>
<div class="t" style="top:856.07px;font-size:12.5px;color:#2d7fc6;transform:scaleX(0.9322);transform-origin:left center;left:521.6px;">Dodaj inną absencję</div>
<div class="t" style="top:871.07px;font-size:12.5px;color:#2d7fc6;transform:scaleX(0.9469);transform-origin:left center;left:521.6px;">Dodaj zmianę w godzinach przepracowanych</div>
<div class="a" style="left:1565px;top:722px;width:11px;height:119px;background:#bdbdbd;"></div>
<svg class="a" style="left:1563px;top:708px;" width="12" height="8" viewBox="0 0 12 8"><path d="M1.5 6.5L6 2l4.5 4.5" fill="none" stroke="#c8c8c8" stroke-width="1.4"/></svg>
<div class="t" style="top:882.59px;font-size:11px;color:#111;transform:scaleX(1.2174);transform-origin:left center;left:1558px;">+/-</div>
<div class="a" style="left:602px;top:367px;width:319px;height:303px;background:#ffffff;border:1px solid #1896dc;box-sizing:border-box;box-shadow:4px 4px 4px rgba(0,0,0,0.38);"></div>
<div class="a" style="left:603px;top:367px;width:317px;height:24px;background:linear-gradient(#c2e0f1,#d4ebf8);"></div>
<svg class="a" style="left:614.6px;top:372.8px;" width="14" height="14" viewBox="0 0 14 14"><path d="M6.7 0v13.4M0 6.7h13.4" stroke="#1c8a1c" stroke-width="3"/></svg>
<div class="t" style="top:380.24px;font-size:12px;color:#000;transform:scaleX(0.9728);transform-origin:left center;left:636.8px;">Dodaj</div>
<svg class="a" style="left:900px;top:374.5px;" width="7" height="10" viewBox="0 0 7 10"><path d="M1.3 1.5L4.8 5 1.3 8.5" fill="none" stroke="#222" stroke-width="1.4"/></svg>
<svg class="a" style="left:613.3px;top:394.3px;" width="15" height="15" viewBox="0 0 15 15"><circle cx="6.4" cy="6.4" r="4.7" fill="none" stroke="#7cbde0" stroke-width="2.1"/><path d="M9.8 9.8l4.2 4.2" stroke="#7cbde0" stroke-width="2.6"/></svg>
<div class="t" style="top:402.24px;font-size:12px;color:#9a9a9a;transform:scaleX(0.9295);transform-origin:left center;left:636.8px;">Pokaż</div>
<div class="t" style="top:402.24px;font-size:12px;color:#9a9a9a;transform:scaleX(0.7855);transform-origin:left center;left:861.9px;">F3</div>
<svg class="a" style="left:614px;top:417px;" width="15" height="15" viewBox="0 0 15 15"><g transform="translate(6.9 6.9) rotate(45)" fill="#7fc0df"><path d="M-1 -9.4Q0 -10.4 1 -9.4L1.75 1.1H-1.75Z"/><path d="M-2.4 4.3A2.4 2.4 0 0 1 2.4 4.3C2.4 6.6 1.2 8.6 -0.4 9.9C-0.2 8.4 -2.4 7.2 -2.4 4.3Z"/></g></svg>
<div class="t" style="top:424.24px;font-size:12px;color:#9a9a9a;transform:scaleX(0.9733);transform-origin:left center;left:636.8px;">Popraw</div>
<div class="t" style="top:424.24px;font-size:12px;color:#9a9a9a;transform:scaleX(0.8069);transform-origin:left center;left:861.9px;">F4</div>
<svg class="a" style="left:613px;top:438px;" width="16" height="16" viewBox="0 0 16 16"><rect x="4.6" y="1.5" width="7" height="5.5" fill="#fff" stroke="#0a86be" stroke-width="1.1"/><rect x="1" y="6.1" width="13.9" height="6.7" rx="1.6" fill="#0a86be"/><rect x="4.6" y="8" width="1.8" height="1" fill="#cfe8f3"/><rect x="4.6" y="12.4" width="7" height="2.3" fill="#fff" stroke="#0a86be" stroke-width="1.1"/></svg>
<div class="t" style="top:446.24px;font-size:12px;color:#000;left:636.8px;">Drukuj</div>
<svg class="a" style="left:900px;top:440.5px;" width="7" height="10" viewBox="0 0 7 10"><path d="M1.3 1.5L4.8 5 1.3 8.5" fill="none" stroke="#222" stroke-width="1.4"/></svg>
<div class="a" style="left:639px;top:460px;width:270px;height:1px;background:#e2e2e2;"></div>
<div class="a" style="left:639px;top:533px;width:270px;height:1px;background:#e2e2e2;"></div>
<div class="a" style="left:639px;top:562px;width:270px;height:1px;background:#e2e2e2;"></div>
<div class="a" style="left:639px;top:591px;width:270px;height:1px;background:#e2e2e2;"></div>
<div class="a" style="left:639px;top:620px;width:270px;height:1px;background:#e2e2e2;"></div>
<div class="t" style="top:475.64px;font-size:12px;color:#000;transform:scaleX(0.9646);transform-origin:left center;left:636.8px;">Sumaryczna ewidencja czasu pracy</div>
<div class="t" style="top:497.24px;font-size:12px;color:#000;transform:scaleX(0.9537);transform-origin:left center;left:636.8px;">Wczytaj zaświadczenia lekarskie</div>
<div class="t" style="top:519.24px;font-size:12px;color:#000;transform:scaleX(0.9775);transform-origin:left center;left:636.8px;">Wypełnij plan pracy / ECP</div>
<div class="t" style="top:548.24px;font-size:12px;color:#000;transform:scaleX(0.9323);transform-origin:left center;left:636.8px;">Praca zdalna</div>
<svg class="a" style="left:900px;top:542.5px;" width="7" height="10" viewBox="0 0 7 10"><path d="M1.3 1.5L4.8 5 1.3 8.5" fill="none" stroke="#222" stroke-width="1.4"/></svg>
<div class="t" style="top:577.24px;font-size:12px;color:#000;transform:scaleX(0.9936);transform-origin:left center;left:636.8px;">Pracownik</div>
<svg class="a" style="left:900px;top:571.5px;" width="7" height="10" viewBox="0 0 7 10"><path d="M1.3 1.5L4.8 5 1.3 8.5" fill="none" stroke="#222" stroke-width="1.4"/></svg>
<div class="t" style="top:606.24px;font-size:12px;color:#000;transform:scaleX(0.9473);transform-origin:left center;left:636.8px;">Usuń wszystkie zapisy z dnia</div>
<div class="t" style="top:606.24px;font-size:12px;color:#000;transform:scaleX(0.9398);transform-origin:left center;left:861.9px;">Delete</div>
<div class="t" style="top:635.24px;font-size:12px;color:#000;transform:scaleX(0.9529);transform-origin:left center;left:636.8px;">Idź do dzisiaj</div>
<div class="t" style="top:635.24px;font-size:12px;color:#000;transform:scaleX(1.0184);transform-origin:left center;left:861.9px;">Home</div>
<div class="t" style="top:657.24px;font-size:12px;color:#000;transform:scaleX(0.9760);transform-origin:left center;left:636.8px;">Idź do daty</div>
<div class="t" style="top:657.24px;font-size:12px;color:#000;transform:scaleX(0.9770);transform-origin:left center;left:861.9px;">Ctrl+G</div>
<div class="a" style="left:917px;top:366px;width:380px;height:244px;background:#ffffff;border:1px solid #c6e2f3;box-sizing:border-box;box-shadow:4px 4px 4px rgba(0,0,0,0.38);"></div>
<div class="a" style="left:919px;top:507px;width:377px;height:24px;background:linear-gradient(#c2e0f1,#d4ebf8);"></div>
<div class="a" style="left:925px;top:370px;width:22px;height:18px;background:#ede5e3;"></div>
<div class="t" style="top:380.04px;font-size:12.3px;color:#7b2a14;font-weight:700;transform:scaleX(0.8781);transform-origin:center center;left:635.8px;width:600px;text-align:center;">CH</div>
<div class="t" style="top:379.24px;font-size:12px;color:#000;transform:scaleX(0.9820);transform-origin:left center;left:951.8px;">Choroba/zasiłek</div>
<div class="t" style="top:379.24px;font-size:12px;color:#000;transform:scaleX(1.0152);transform-origin:left center;left:1205.9px;">Ctrl+Z</div>
<div class="a" style="left:925px;top:392px;width:22px;height:18px;background:#ede5e3;"></div>
<div class="t" style="top:402.04px;font-size:12.3px;color:#7b2a14;font-weight:700;transform:scaleX(0.9231);transform-origin:center center;left:635.8px;width:600px;text-align:center;">UR</div>
<div class="t" style="top:401.24px;font-size:12px;color:#000;transform:scaleX(0.9764);transform-origin:left center;left:951.8px;">Urlop</div>
<div class="t" style="top:401.24px;font-size:12px;color:#000;left:1205.9px;">Ctrl+U</div>
<div class="a" style="left:925px;top:414px;width:22px;height:18px;background:#ede5e3;"></div>
<div class="t" style="top:424.04px;font-size:12.3px;color:#7b2a14;font-weight:700;transform:scaleX(0.9231);transform-origin:center center;left:635.8px;width:600px;text-align:center;">UR</div>
<div class="t" style="top:423.24px;font-size:12px;color:#000;transform:scaleX(0.9795);transform-origin:left center;left:951.8px;">Urlopy zbiorczo</div>
<div class="a" style="left:925px;top:436px;width:22px;height:18px;background:#ede5e3;"></div>
<div class="t" style="top:446.04px;font-size:12.3px;color:#7b2a14;font-weight:700;transform:scaleX(0.9231);transform-origin:center center;left:635.8px;width:600px;text-align:center;">UR</div>
<div class="t" style="top:445.24px;font-size:12px;color:#000;left:951.8px;">Urlop planowany</div>
<div class="t" style="top:445.24px;font-size:12px;color:#000;transform:scaleX(1.0098);transform-origin:left center;left:1205.9px;">Ctrl+Shift+U</div>
<div class="a" style="left:925px;top:458px;width:22px;height:18px;background:#ede5e3;"></div>
<div class="t" style="top:468.04px;font-size:12.3px;color:#7b2a14;font-weight:700;transform:scaleX(0.9024);transform-origin:center center;left:635.8px;width:600px;text-align:center;">IA</div>
<div class="t" style="top:467.24px;font-size:12px;color:#000;transform:scaleX(0.9780);transform-origin:left center;left:951.8px;">Inna nieobecność</div>
<div class="t" style="top:467.24px;font-size:12px;color:#000;transform:scaleX(1.0193);transform-origin:left center;left:1205.9px;">Ctrl+N</div>
<div class="a" style="left:954px;top:481px;width:332px;height:1px;background:#e2e2e2;"></div>
<div class="a" style="left:925px;top:487px;width:22px;height:18px;background:#ede5e3;"></div>
<div class="t" style="top:497.04px;font-size:12.3px;color:#7b2a14;font-weight:700;transform:scaleX(0.9214);transform-origin:center center;left:635.8px;width:600px;text-align:center;">GD</div>
<div class="t" style="top:496.24px;font-size:12px;color:#000;font-weight:700;transform:scaleX(0.9570);transform-origin:left center;left:951.8px;">Zmiana w godzinach przepracowanych</div>
<div class="t" style="top:496.24px;font-size:12px;color:#000;font-weight:700;transform:scaleX(0.9727);transform-origin:left center;left:1205.9px;">Ctrl+O</div>
<div class="a" style="left:925px;top:509px;width:22px;height:18px;background:#c5d9e3;"></div>
<div class="t" style="top:519.04px;font-size:12.3px;color:#7b2a14;font-weight:700;transform:scaleX(0.9488);transform-origin:center center;left:635.8px;width:600px;text-align:center;">WY</div>
<div class="t" style="top:518.24px;font-size:12px;color:#000;transform:scaleX(0.9879);transform-origin:left center;left:951.8px;">Zmiana w planie pracy</div>
<div class="t" style="top:518.24px;font-size:12px;color:#000;transform:scaleX(0.9948);transform-origin:left center;left:1205.9px;">Ctrl+K</div>
<div class="a" style="left:925px;top:538px;width:22px;height:18px;background:#ede5e3;"></div>
<div class="t" style="top:548.04px;font-size:12.3px;color:#7b2a14;font-weight:700;transform:scaleX(0.9119);transform-origin:center center;left:635.8px;width:600px;text-align:center;">DK</div>
<div class="t" style="top:547.24px;font-size:12px;color:#000;transform:scaleX(0.9617);transform-origin:left center;left:951.8px;">Delegacja krajowa</div>
<div class="a" style="left:925px;top:560px;width:22px;height:18px;background:#ede5e3;"></div>
<div class="t" style="top:570.04px;font-size:12.3px;color:#7b2a14;font-weight:700;transform:scaleX(0.9119);transform-origin:center center;left:635.8px;width:600px;text-align:center;">DR</div>
<div class="t" style="top:569.24px;font-size:12px;color:#000;transform:scaleX(0.9522);transform-origin:left center;left:951.8px;">Delegacja zagraniczna</div>
<div class="a" style="left:954px;top:583px;width:332px;height:1px;background:#e2e2e2;"></div>
<svg class="a" style="left:929px;top:590px;" width="14" height="15" viewBox="0 0 14 15"><rect x="6" y="1" width="7" height="9" fill="#80c0dc"/><rect x="0" y="4" width="9" height="11" fill="#fff"/><rect x="1" y="5" width="7" height="9" fill="#80c0dc"/></svg>
<div class="t" style="top:597.74px;font-size:12px;color:#aaaaaa;transform:scaleX(0.9759);transform-origin:left center;left:951.8px;">Powiel</div>
<div class="t" style="top:597.74px;font-size:12px;color:#aaaaaa;transform:scaleX(0.9902);transform-origin:left center;left:1205.9px;">Ctrl+D</div>
<div class="a" style="left:9px;top:181.5px;width:152px;height:23.0px;box-sizing:border-box;border:2px solid #ff1010;border-radius:7px;box-shadow:inset 0 0 6px rgba(0,0,0,0.25),1px 2px 3px rgba(0,0,0,0.22)"></div>
<div class="a" style="left:107.1px;top:150.60000000000002px;width:29.4px;height:29.4px;box-sizing:border-box;border-radius:50%;background:radial-gradient(circle at 50% 35%,rgba(230,58,58,0.9),rgba(218,36,36,0.92));border:2px solid #ff1414;box-shadow:1px 2px 4px rgba(0,0,0,0.3);"></div>
<div class="t" style="top:165.93px;font-size:15.5px;color:#fff;transform:scaleX(0.8351);transform-origin:center center;left:-178.2px;width:600px;text-align:center;-webkit-text-stroke:0.4px #fff;">1</div>
<div class="a" style="left:199.5px;top:162.5px;width:137.0px;height:29.0px;box-sizing:border-box;border:2px solid #ff1010;border-radius:7px;box-shadow:inset 0 0 6px rgba(0,0,0,0.25),1px 2px 3px rgba(0,0,0,0.22)"></div>
<div class="a" style="left:338.7px;top:161.8px;width:29.4px;height:29.4px;box-sizing:border-box;border-radius:50%;background:radial-gradient(circle at 50% 35%,rgba(230,58,58,0.9),rgba(218,36,36,0.92));border:2px solid #ff1414;box-shadow:1px 2px 4px rgba(0,0,0,0.3);"></div>
<div class="t" style="top:177.13px;font-size:15.5px;color:#fff;transform:scaleX(0.8351);transform-origin:center center;left:53.39999999999998px;width:600px;text-align:center;-webkit-text-stroke:0.4px #fff;">2</div>
<div class="a" style="left:602px;top:366px;width:318.5px;height:25.5px;box-sizing:border-box;border:2px solid #ff1010;border-radius:7px;box-shadow:inset 0 0 6px rgba(0,0,0,0.25),1px 2px 3px rgba(0,0,0,0.22)"></div>
<div class="a" style="left:748.0px;top:336.3px;width:29.4px;height:29.4px;box-sizing:border-box;border-radius:50%;background:radial-gradient(circle at 50% 35%,rgba(230,58,58,0.9),rgba(218,36,36,0.92));border:2px solid #ff1414;box-shadow:1px 2px 4px rgba(0,0,0,0.3);"></div>
<div class="t" style="top:351.63px;font-size:15.5px;color:#fff;transform:scaleX(0.8351);transform-origin:center center;left:462.70000000000005px;width:600px;text-align:center;-webkit-text-stroke:0.4px #fff;">4</div>
<div class="a" style="left:918.5px;top:506.5px;width:378.5px;height:25.0px;box-sizing:border-box;border:2px solid #ff1010;border-radius:7px;box-shadow:inset 0 0 6px rgba(0,0,0,0.25),1px 2px 3px rgba(0,0,0,0.22)"></div>
<div class="a" style="left:1298.8px;top:503.59999999999997px;width:29.4px;height:29.4px;box-sizing:border-box;border-radius:50%;background:radial-gradient(circle at 50% 35%,rgba(230,58,58,0.9),rgba(218,36,36,0.92));border:2px solid #ff1414;box-shadow:1px 2px 4px rgba(0,0,0,0.3);"></div>
<div class="t" style="top:518.93px;font-size:15.5px;color:#fff;transform:scaleX(0.8351);transform-origin:center center;left:1013.5px;width:600px;text-align:center;-webkit-text-stroke:0.4px #fff;">5</div>
<svg class="a" style="left:330px;top:370px;" width="150" height="70" viewBox="0 0 150 70"><defs><filter id="sh" x="-20%" y="-20%" width="140%" height="160%"><feGaussianBlur in="SourceAlpha" stdDeviation="2"/><feOffset dx="1" dy="3"/><feComponentTransfer><feFuncA type="linear" slope="0.35"/></feComponentTransfer><feMerge><feMergeNode/><feMergeNode in="SourceGraphic"/></feMerge></filter></defs><path filter="url(#sh)" d="M12 57.5 L118 14 L113.5 9.5 L142 10.5 L121.5 30.5 L122.5 25 L14 60 Z" fill="#ff0000"/></svg>
<div class="a" style="left:321.8px;top:409.0px;width:29.4px;height:29.4px;box-sizing:border-box;border-radius:50%;background:radial-gradient(circle at 50% 35%,rgba(230,58,58,0.9),rgba(218,36,36,0.92));border:2px solid #ff1414;box-shadow:1px 2px 4px rgba(0,0,0,0.3);"></div>
<div class="t" style="top:424.33px;font-size:15.5px;color:#fff;transform:scaleX(0.8351);transform-origin:center center;left:36.5px;width:600px;text-align:center;-webkit-text-stroke:0.4px #fff;">3</div>
</body></html>
